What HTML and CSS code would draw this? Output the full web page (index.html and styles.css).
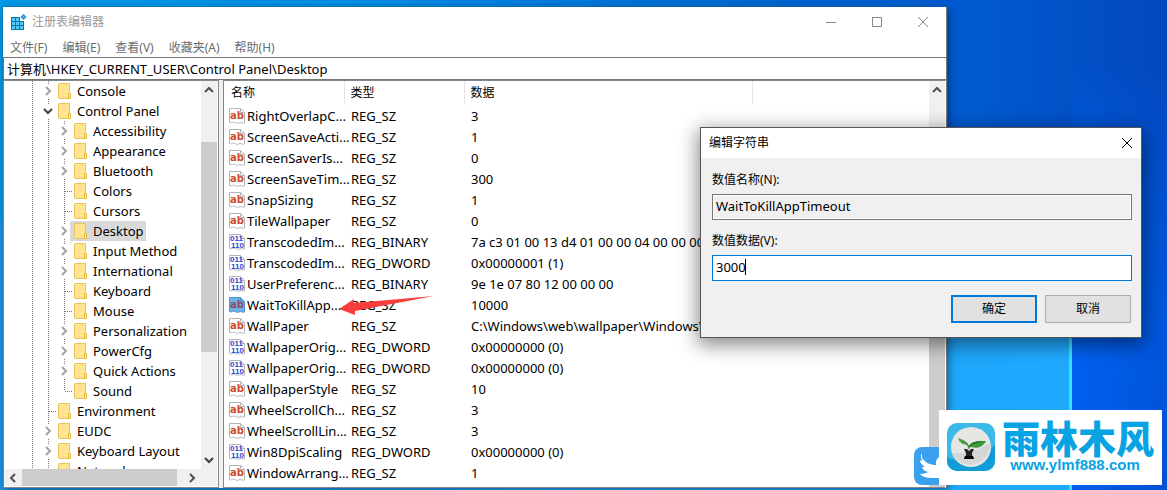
FILE: index.html
```html
<!DOCTYPE html>
<html lang="zh-CN">
<head>
<meta charset="utf-8">
<meta name="viewport" content="width=device-width, initial-scale=1">
<title>注册表编辑器</title>
<link rel="stylesheet" href="styles.css">
</head>
<body>
<svg class="sprite" aria-hidden="true">
  <symbol id="folder" viewBox="0 0 14 16">
    <path d="M1 .5h10.500v10h1v5H1.500a1 1 0 0 1-1-1V1.500a1 1 0 0 1 1-1z" fill="#ffe590" stroke="#eac358"/>
    <path d="M10.500 10.500h2v5h-2z" fill="#ffe9a2" stroke="#e9bd43"/>
  </symbol>
  <symbol id="right" viewBox="0 0 8 10"><path d="M2 1l4 4-4 4" fill="none" stroke="#a3a3a3" stroke-width="2"/></symbol>
  <symbol id="down" viewBox="0 0 10 8"><path d="M1 2l4 4 4-4" fill="none" stroke="#404040" stroke-width="2"/></symbol>
  <symbol id="up" viewBox="0 0 10 8"><path d="M1 6l4-4 4 4" fill="none" stroke="#505050" stroke-width="2"/></symbol>
  <symbol id="sheet" viewBox="0 0 16 16">
    <path class="paper" d="M.5.5h11l4 4v10.500c-1.500.8-3-.6-4.500-.4s-2 1.200-3.500.6-2.500-1.400-4-.8-2 .6-3 .1z"/>
    <path class="fold" d="M11.500.5v4h4"/>
  </symbol>
  <symbol id="str" viewBox="0 0 16 16">
    <use href="#sheet"/><text x="1" y="11" class="glyph-ab">ab</text>
  </symbol>
  <symbol id="bin" viewBox="0 0 16 16">
    <use href="#sheet"/><text x="1" y="7" class="glyph-bin">011</text><text x="2" y="14" class="glyph-bin">110</text>
  </symbol>
  <symbol id="close" viewBox="0 0 12 12"><path d="M1 1l10 10M11 1L1 11" fill="none" stroke="currentColor"/></symbol>
</svg>

<main class="desktop">
  <section class="window" aria-label="注册表编辑器">
    <header class="titlebar">
      <svg class="app-icon" viewBox="0 0 16 16" aria-hidden="true">
        <path d="M0 3h13v13H0z" fill="#0878b5"/>
        <path d="M1 4h3v3H1zM5 4h3v3H5zM1 8h3v3H1zM5 8h3v3H5zM9 8h3v3H9zM1 12h3v3H1zM5 12h3v3H5zM9 12h3v3H9z" fill="#50cbf5"/>
        <path d="M9 0h7v7H9z" fill="#fff"/>
        <path d="M12.500 0l3 3-3 3-3-3z" fill="#168bc6"/><path d="M12.500 1.500L14 3l-1.500 1.500L11 3z" fill="#50b8e4"/>
      </svg>
      <h1>注册表编辑器</h1>
      <div class="controls">
        <button aria-label="最小化"><svg viewBox="0 0 12 12"><path d="M1 6.500h10" stroke="currentColor"/></svg></button>
        <button aria-label="最大化"><svg viewBox="0 0 12 12"><path d="M1.500 1.500h9v9h-9z" fill="none" stroke="currentColor"/></svg></button>
        <button aria-label="关闭"><svg><use href="#close"/></svg></button>
      </div>
    </header>
    <nav class="menu">
      <button>文件(F)</button><button>编辑(E)</button><button>查看(V)</button><button>收藏夹(A)</button><button>帮助(H)</button>
    </nav>
    <input class="address" aria-label="地址" value="计算机\HKEY_CURRENT_USER\Control Panel\Desktop">
    <div class="panes">
      <div class="tree-pane">
        <div class="tree-body">
          <ul class="tree">
            <li><div class="node"><span class="tw"><svg class="r"><use href="#right"/></svg></span><svg class="folder"><use href="#folder"/></svg><span class="label">Console</span></div></li>
            <li><div class="node"><span class="tw"><svg class="d"><use href="#down"/></svg></span><svg class="folder"><use href="#folder"/></svg><span class="label">Control Panel</span></div>
              <ul class="branch">
                <li class="node"><span class="tw"><svg class="r"><use href="#right"/></svg></span><svg class="folder"><use href="#folder"/></svg><span class="label">Accessibility</span></li>
                <li class="node"><span class="tw"><svg class="r"><use href="#right"/></svg></span><svg class="folder"><use href="#folder"/></svg><span class="label">Appearance</span></li>
                <li class="node"><span class="tw"><svg class="r"><use href="#right"/></svg></span><svg class="folder"><use href="#folder"/></svg><span class="label">Bluetooth</span></li>
                <li class="node"><span class="leaf"></span><svg class="folder"><use href="#folder"/></svg><span class="label">Colors</span></li>
                <li class="node"><span class="leaf"></span><svg class="folder"><use href="#folder"/></svg><span class="label">Cursors</span></li>
                <li class="node selected"><span class="tw"><svg class="r"><use href="#right"/></svg></span><svg class="folder"><use href="#folder"/></svg><span class="label">Desktop</span></li>
                <li class="node"><span class="tw"><svg class="r"><use href="#right"/></svg></span><svg class="folder"><use href="#folder"/></svg><span class="label">Input Method</span></li>
                <li class="node"><span class="tw"><svg class="r"><use href="#right"/></svg></span><svg class="folder"><use href="#folder"/></svg><span class="label">International</span></li>
                <li class="node"><span class="leaf"></span><svg class="folder"><use href="#folder"/></svg><span class="label">Keyboard</span></li>
                <li class="node"><span class="leaf"></span><svg class="folder"><use href="#folder"/></svg><span class="label">Mouse</span></li>
                <li class="node"><span class="tw"><svg class="r"><use href="#right"/></svg></span><svg class="folder"><use href="#folder"/></svg><span class="label">Personalization</span></li>
                <li class="node"><span class="tw"><svg class="r"><use href="#right"/></svg></span><svg class="folder"><use href="#folder"/></svg><span class="label">PowerCfg</span></li>
                <li class="node"><span class="tw"><svg class="r"><use href="#right"/></svg></span><svg class="folder"><use href="#folder"/></svg><span class="label">Quick Actions</span></li>
                <li class="node"><span class="leaf"></span><svg class="folder"><use href="#folder"/></svg><span class="label">Sound</span></li>
              </ul>
            </li>
            <li><div class="node"><span class="leaf"></span><svg class="folder"><use href="#folder"/></svg><span class="label">Environment</span></div></li>
            <li><div class="node"><span class="tw"><svg class="r"><use href="#right"/></svg></span><svg class="folder"><use href="#folder"/></svg><span class="label">EUDC</span></div></li>
            <li><div class="node"><span class="tw"><svg class="r"><use href="#right"/></svg></span><svg class="folder"><use href="#folder"/></svg><span class="label">Keyboard Layout</span></div></li>
            <li><div class="node"><span class="leaf"></span><svg class="folder"><use href="#folder"/></svg><span class="label">Network</span></div></li>
          </ul>
          <div class="vscroll">
            <button aria-label="向上滚动"><svg><use href="#up"/></svg></button>
            <div class="track tree-track"><div class="thumb"></div></div>
            <button aria-label="向下滚动"><svg><use href="#down"/></svg></button>
          </div>
        </div>
        <div class="hscroll">
          <button aria-label="向左滚动"><svg viewBox="0 0 8 10"><path d="M6 1L2 5l4 4" fill="none" stroke="#505050" stroke-width="2"/></svg></button>
          <div class="hthumb"></div>
          <button aria-label="向右滚动"><svg viewBox="0 0 8 10"><path d="M2 1l4 4-4 4" fill="none" stroke="#505050" stroke-width="2"/></svg></button>
        </div>
      </div>
      <div class="list-pane">
        <div class="list-body">
          <table class="list">
            <colgroup><col class="c-name"><col class="c-type"><col class="c-data"><col></colgroup>
            <thead><tr><th>名称</th><th>类型</th><th>数据</th><th></th></tr></thead>
            <tbody>
              <tr><td><svg><use href="#str"/></svg>RightOverlapC...</td><td>REG_SZ</td><td>3</td></tr>
              <tr><td><svg><use href="#str"/></svg>ScreenSaveActi...</td><td>REG_SZ</td><td>1</td></tr>
              <tr><td><svg><use href="#str"/></svg>ScreenSaverIs...</td><td>REG_SZ</td><td>0</td></tr>
              <tr><td><svg><use href="#str"/></svg>ScreenSaveTim...</td><td>REG_SZ</td><td>300</td></tr>
              <tr><td><svg><use href="#str"/></svg>SnapSizing</td><td>REG_SZ</td><td>1</td></tr>
              <tr><td><svg><use href="#str"/></svg>TileWallpaper</td><td>REG_SZ</td><td>0</td></tr>
              <tr><td><svg><use href="#bin"/></svg>TranscodedIm...</td><td>REG_BINARY</td><td>7a c3 01 00 13 d4 01 00 00 04 00 00 00</td></tr>
              <tr><td><svg><use href="#bin"/></svg>TranscodedIm...</td><td>REG_DWORD</td><td>0x00000001 (1)</td></tr>
              <tr><td><svg><use href="#bin"/></svg>UserPreferenc...</td><td>REG_BINARY</td><td>9e 1e 07 80 12 00 00 00</td></tr>
              <tr class="current"><td><svg><use href="#str"/></svg>WaitToKillApp...</td><td>REG_SZ<svg class="arrow" viewBox="0 0 96 20" aria-hidden="true"><path d="M0 13L15 3v4L95 0 16 15v4z" fill="#f93d3c"/></svg></td><td>10000</td></tr>
              <tr><td><svg><use href="#str"/></svg>WallPaper</td><td>REG_SZ</td><td>C:\Windows\web\wallpaper\Windows\img0</td></tr>
              <tr><td><svg><use href="#bin"/></svg>WallpaperOrig...</td><td>REG_DWORD</td><td>0x00000000 (0)</td></tr>
              <tr><td><svg><use href="#bin"/></svg>WallpaperOrig...</td><td>REG_DWORD</td><td>0x00000000 (0)</td></tr>
              <tr><td><svg><use href="#str"/></svg>WallpaperStyle</td><td>REG_SZ</td><td>10</td></tr>
              <tr><td><svg><use href="#str"/></svg>WheelScrollCh...</td><td>REG_SZ</td><td>3</td></tr>
              <tr><td><svg><use href="#str"/></svg>WheelScrollLin...</td><td>REG_SZ</td><td>3</td></tr>
              <tr><td><svg><use href="#bin"/></svg>Win8DpiScaling</td><td>REG_DWORD</td><td>0x00000000 (0)</td></tr>
              <tr><td><svg><use href="#str"/></svg>WindowArrang...</td><td>REG_SZ</td><td>1</td></tr>
            </tbody>
          </table>
        </div>
        <div class="vscroll">
          <button aria-label="向上滚动"><svg><use href="#up"/></svg></button>
          <div class="track list-track"><div class="thumb"></div></div>
        </div>
      </div>
    </div>
  </section>

  <section class="dialog" role="dialog" aria-labelledby="dlg-title">
    <header><h2 id="dlg-title">编辑字符串</h2><button aria-label="关闭"><svg><use href="#close"/></svg></button></header>
    <form>
      <label for="value-name">数值名称(N):</label>
      <input id="value-name" class="readonly" value="WaitToKillAppTimeout" readonly>
      <label for="value-data">数值数据(V):</label>
      <div class="field"><input id="value-data" value="3000"><span class="caret"></span></div>
      <div class="actions"><button type="button" class="primary">确定</button><button type="button">取消</button></div>
    </form>
  </section>

  <svg class="bird" viewBox="0 0 38 38" aria-hidden="true">
    <rect width="50" height="38" rx="8" fill="#3ba1ee"/>
    <path d="M8 10c4 5 8 7 14 7-1-6 4-10 9-9l5 2 5-2v22H17c-4 0-8-1-11-4 4 0 6-1 8-2-3-1-5-2-6-5h3c-3-2-5-4-5-7l3 1c-2-2-3-5-1-8z" transform="translate(0 1)" fill="#fff"/>
  </svg>
  <aside class="brand">
    <svg viewBox="0 0 48 48" aria-hidden="true">
      <rect width="48" height="48" rx="10" fill="#3bb9e8"/>
      <path d="M0 34c16 8 32 4 48-12v16a10 10 0 0 1-10 10H10A10 10 0 0 1 0 38z" fill="#109cd6"/>
      <circle cx="24" cy="24" r="20" fill="#e6e6e4"/>
      <path d="M5 30c13 1 27-3 38-10a20 20 0 0 1-38 10z" fill="#d6d6d6"/>
      <path d="M22 27C21 19 17 18 11 15c2 6 5 6 9 7" fill="#49a544"/>
      <path d="M22 24c2-6 8-6 17-6-3 6-8 8-15 6z" fill="#3f9c3c"/>
      <path d="M11 15c5 3 10 4 11 12 1-6 7-7 17-9-10 0-15 1-17 5-2-5-6-6-11-8z" fill="#257c2a"/>
      <path d="M17 26h3l2 2 2-2h3l-2 4v2l2 4H17l2-4v-2z" fill="#222"/><path d="M18 33h8l1 3H17z" fill="#050505"/>
    </svg>
    <div class="brand-text"><strong>雨林木风</strong><a href="#">www.ylmf888.com</a></div>
  </aside>
</main>
</body>
</html>
```
FILE: styles.css
```css
* { box-sizing: border-box; }
body {
  margin: 0;
  font: 13px/20px "Noto Sans", "Noto Sans CJK SC", sans-serif;
  color: #000;
}
button, input { font: inherit; color: inherit; border: 0; padding: 0; margin: 0; background: none; border-radius: 0; }
button { display: flex; align-items: center; justify-content: center; }
h1, h2 { margin: 0; font-weight: 400; font-size: 12px; }
ul { list-style: none; margin: 0; padding: 0; }
.sprite { display: none; }
.paper { fill: var(--paper, #fff); stroke: var(--paper-edge, #b4b4b4); }
.fold { fill: none; stroke: var(--paper-edge, #b4b4b4); }
.glyph-ab { font: 700 10px "DejaVu Sans", sans-serif; fill: var(--ink, #d04a2c); }
.glyph-bin { font: 700 8px "Liberation Sans", sans-serif; fill: #2648d8; }

.desktop {
  position: relative;
  height: 100vh;
  min-height: 490px;
  overflow: hidden;
  background:
    linear-gradient(90deg, #0000 calc(100% - 98px), #35e2f5 calc(100% - 98px), #35e2f5 calc(100% - 95px), #0000 calc(100% - 95px)) 0 220px no-repeat,
    linear-gradient(90deg, #1992e6, #20aaff) -98px 220px no-repeat,
    linear-gradient(90deg, #0098e6 0, #008ee4 30%, #0064d0 68%, #0059d0 84%, #0448bd 100%);
}
.desktop::before {
  content: "";
  position: absolute;
  inset: 0 0 0 calc(100% - 95px);
  background: linear-gradient(100deg, #0068ff, #0052d5);
  mask-image: linear-gradient(#0000 60px, #000 330px);
}
.desktop::after {
  content: "";
  position: absolute;
  inset: 220px 0 auto auto;
  width: 95px;
  height: 270px;
  z-index: -1;
}

.window {
  position: absolute;
  inset: 7px 220px 2px 3px;
  display: flex;
  flex-direction: column;
  background: #fff;
  border-right: 1px solid #777;
  box-shadow: 0 0 0 1px #1a6ea866, 2px 2px 8px #0006;
}
.titlebar { display: flex; align-items: center; height: 29px; padding-left: 8px; }
.app-icon { width: 16px; height: 16px; margin-right: 5px; }
.titlebar h1 { color: #999; }
.controls { display: flex; margin-left: auto; color: #888; }
.controls button { width: 46px; height: 29px; }
.controls svg { width: 12px; height: 12px; }
.menu { display: flex; gap: 15px; height: 21px; padding: 2px 0 0 7px; color: #6d6d6d; font-size: 12px; line-height: 18px; }
.address { flex: none; height: 23px; padding: 0 3px; border: 1px solid #777; border-right: 0; }
.panes { flex: 1; min-height: 0; display: flex; gap: 4px; background: #f0f0f0; }
.tree-pane, .list-pane { border: 1px solid #828790; background: #fff; overflow: hidden; }
.tree-pane { width: 216px; display: flex; flex-direction: column; padding: 0 1px 1px 0; }
.tree-body { flex: 1; min-height: 0; display: flex; }
.tree {
  flex: 1;
  min-width: 0;
  overflow: hidden;
  background:
    repeating-linear-gradient(#777 0 1px, #fff 1px 2px) 28px 0 / 1px 100% no-repeat,
    repeating-linear-gradient(#777 0 1px, #fff 1px 2px) 44px 0 / 1px 100% no-repeat;
}
.branch {
  padding-left: 16px;
  background: repeating-linear-gradient(#777 0 1px, #fff 1px 2px) 60px 0 / 1px calc(100% - 10px) no-repeat;
}
.node { display: flex; align-items: center; height: 20px; padding-left: 39px; white-space: nowrap; }
.tw { display: flex; align-items: center; justify-content: center; width: 10px; height: 14px; background: #fff; margin-right: 5px; }
.r { width: 8px; height: 10px; }
.d { width: 10px; height: 8px; }
.leaf { width: 7px; height: 1px; margin: 0 2px 0 6px; background: repeating-linear-gradient(90deg, #777 0 1px, #fff 1px 2px); }
.folder { width: 14px; height: 16px; flex: none; }
.label { padding: 0 4px 0 5px; }
.selected { background: linear-gradient(#d9d9d9, #d9d9d9) 50px 0 / 76px 20px no-repeat; }

.vscroll { flex: none; width: 16px; display: flex; flex-direction: column; background: #f0f0f0; }
.vscroll button { height: 18px; }
.vscroll svg { width: 10px; height: 8px; }
.track { flex: 1; }
.thumb { background: #cdcdcd; }
.tree-track { padding-top: 43px; }
.tree-track .thumb { height: 68%; }
.list-track { padding-top: 200px; }
.list-track .thumb { height: 100%; }
.hscroll { flex: none; display: flex; height: 17px; padding-right: 16px; background: #f0f0f0; }
.hscroll button { width: 18px; }
.hscroll svg { width: 8px; height: 10px; }
.hthumb { width: 155px; margin-right: auto; background: #cdcdcd; }

.list-pane { flex: 1; min-width: 0; display: flex; border-right: 1px solid #fff; }
.list-body { flex: 1; min-width: 0; overflow: hidden; }
.list { width: 100%; border-collapse: collapse; table-layout: fixed; white-space: nowrap; }
.c-name { width: 120px; }
.c-type { width: 120px; }
.c-data { width: 288px; }
.list th { height: 24px; padding: 0 0 0 6px; font-weight: 400; font-size: 12px; text-align: left; border-right: 1px solid #e5e5e5; }
.list th:last-child { border-right: 0; }
.list td { height: 21px; padding: 0 0 0 7px; }
.list th:first-child { padding-left: 7px; }
.list td:first-child { padding-left: 5px; }
.list td:first-child svg { width: 16px; height: 16px; margin-right: 2px; vertical-align: -3px; }
.current td { position: relative; }
.current td:first-child { --paper: #6db2e6; --paper-edge: #4c92c8; --ink: #8c4c66; }
.list .arrow { position: absolute; left: -5px; top: 2px; width: 96px; height: 20px; }

.dialog {
  position: absolute;
  top: 127px;
  right: 25px;
  width: 442px;
  background: #f0f0f0;
  border: 1px solid #555;
  box-shadow: 0 5px 18px 2px #0007;
}
.dialog header { display: flex; align-items: center; justify-content: space-between; height: 30px; padding-left: 8px; background: #fff; }
.dialog header button { width: 28px; height: 30px; }
.dialog header svg { width: 12px; height: 12px; }
.dialog form { display: flex; flex-direction: column; padding: 12px 9px 14px 11px; }
.dialog label { font-size: 12px; margin-bottom: 4px; }
.dialog input { width: 100%; height: 26px; padding: 0 3px 2px; border: 1px solid #0078d7; background: #fff; }
.dialog input.readonly { border-color: #777; background: #f0f0f0; box-shadow: inset 0 0 0 1px #fff; margin-bottom: 11px; }
.field { position: relative; }
.caret { position: absolute; left: 33px; top: 4px; width: 1px; height: 16px; background: #000; }
.actions { display: flex; justify-content: flex-end; gap: 8px; margin-top: 14px; padding-right: 1px; }
.actions button { width: 86px; height: 28px; border: 1px solid #adadad; background: #e1e1e1; font-size: 12px; }
.actions .primary { border: 2px solid #0078d7; }

.bird { position: absolute; right: 215px; bottom: 5px; width: 38px; height: 38px; }
.brand {
  position: absolute;
  right: 5px;
  bottom: 5px;
  display: flex;
  align-items: center;
  gap: 7px;
  padding: 0 8px 2px;
  height: 75px;
  background: #fff;
}
.brand > svg { width: 48px; height: 48px; flex: none; }
.brand-text { display: flex; flex-direction: column; padding-bottom: 2px; color: #09a3e3; }
.brand strong { font: 900 38px/38px "Noto Sans CJK SC", sans-serif; }
.brand a { color: inherit; text-decoration: none; text-align: center; font: 700 15px/18px "Liberation Sans", sans-serif; padding-right: 6px; }
```
